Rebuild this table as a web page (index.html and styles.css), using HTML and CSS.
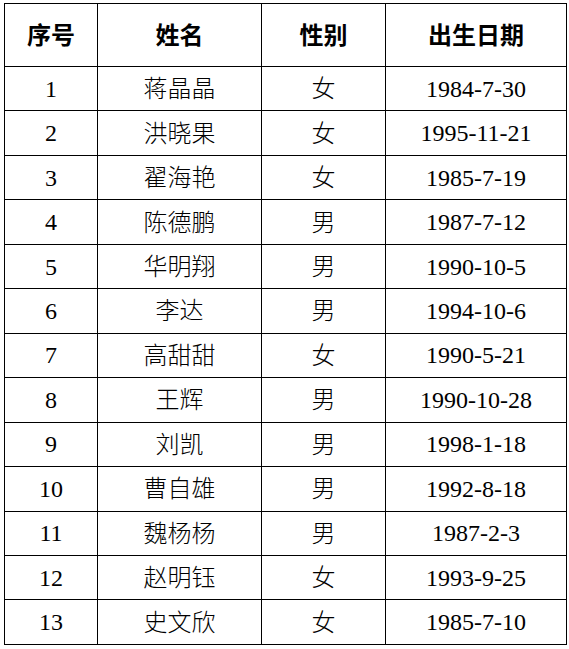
FILE: index.html
```html
<!DOCTYPE html>
<html lang="zh">
<head>
<meta charset="utf-8">
<link rel="stylesheet" href="styles.css">
</head>
<body>
<table class="roster">
<colgroup>
<col class="c-no"><col class="c-name"><col class="c-sex"><col class="c-date">
</colgroup>
<thead>
<tr class="head"><th>序号</th><th>姓名</th><th>性别</th><th>出生日期</th></tr>
</thead>
<tbody>
<tr><td>1</td><td>蒋晶晶</td><td>女</td><td>1984-7-30</td></tr>
<tr><td>2</td><td>洪晓果</td><td>女</td><td>1995-11-21</td></tr>
<tr><td>3</td><td>翟海艳</td><td>女</td><td>1985-7-19</td></tr>
<tr><td>4</td><td>陈德鹏</td><td>男</td><td>1987-7-12</td></tr>
<tr><td>5</td><td>华明翔</td><td>男</td><td>1990-10-5</td></tr>
<tr><td>6</td><td>李达</td><td>男</td><td>1994-10-6</td></tr>
<tr><td>7</td><td>高甜甜</td><td>女</td><td>1990-5-21</td></tr>
<tr><td>8</td><td>王辉</td><td>男</td><td>1990-10-28</td></tr>
<tr><td>9</td><td>刘凯</td><td>男</td><td>1998-1-18</td></tr>
<tr><td>10</td><td>曹自雄</td><td>男</td><td>1992-8-18</td></tr>
<tr><td>11</td><td>魏杨杨</td><td>男</td><td>1987-2-3</td></tr>
<tr><td>12</td><td>赵明钰</td><td>女</td><td>1993-9-25</td></tr>
<tr><td>13</td><td>史文欣</td><td>女</td><td>1985-7-10</td></tr>
</tbody>
</table>
</body>
</html>
```
FILE: styles.css
```css
html, body {
  margin: 0;
  padding: 0;
  background: #fff;
}
body {
  padding: 3px 0 0 4px;
  font-family: "Liberation Serif", "Noto Sans CJK SC", serif;
  color: #000;
}
.roster {
  border-collapse: collapse;
  table-layout: fixed;
  width: 562px;
  font-size: 24px;
}
.c-no { width: 93px; }
.c-name { width: 164px; }
.c-sex { width: 124px; }
.c-date { width: 181px; }
.roster th, .roster td {
  border: 1px solid #000;
  padding: 0;
  text-align: center;
  vertical-align: middle;
  line-height: 1;
}
.roster th {
  font-family: "Noto Sans CJK SC", sans-serif;
  font-weight: 700;
  height: 60px;
  padding-bottom: 2px;
}
.roster td {
  height: 43.46px;
  font-weight: 400;
}
.roster td:nth-child(2), .roster td:nth-child(3) {
  font-family: "Noto Sans CJK SC", sans-serif;
  font-weight: 300;
  height: 40.46px;
  padding-bottom: 3px;
}
```
